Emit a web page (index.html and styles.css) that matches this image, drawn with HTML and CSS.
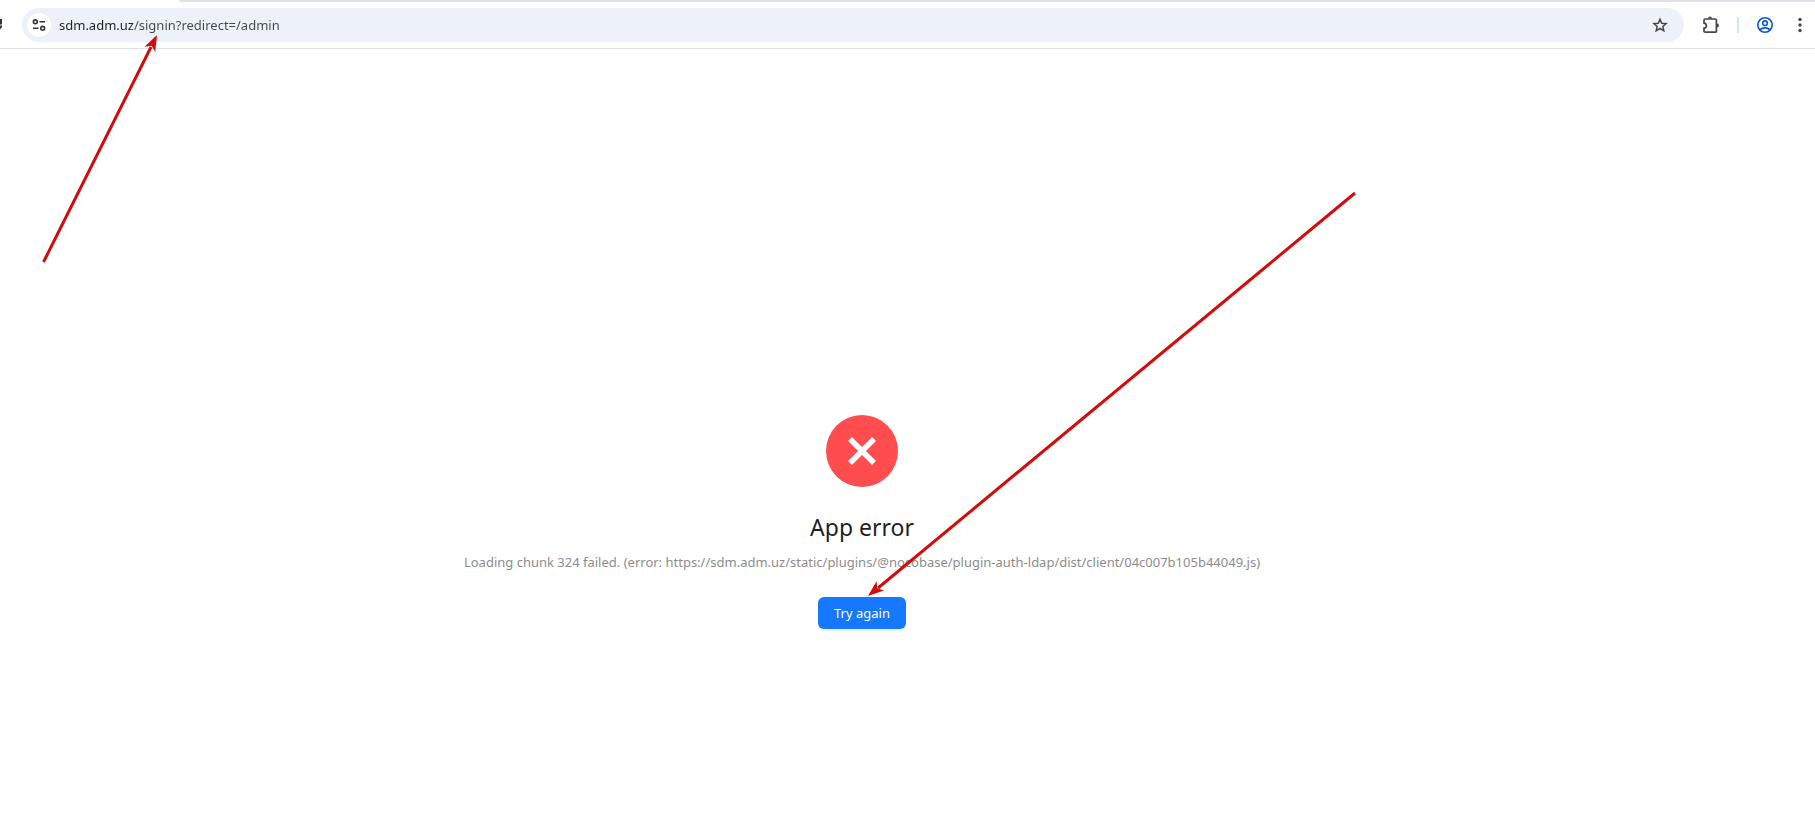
FILE: index.html
```html
<!DOCTYPE html>
<html lang="en">
<head>
    <meta charset="UTF-8">
    <meta name="viewport" content="width=device-width, initial-scale=1.0">
    <title>App error</title>
    <link rel="stylesheet" href="styles.css">
</head>
<body>
    <header class="browser">
        <div class="tab-strip"></div>
        <div class="toolbar">
            <button class="reload" aria-label="Reload">
                <svg width="16" height="16" viewBox="0 0 16 16" fill="none" stroke="#333" stroke-width="2">
                    <path d="M14.5 9A6 6 0 1 1 13 4.5"/>
                    <path d="M15 2v4.500h-5M16 9.500h-3"/>
                </svg>
            </button>
            <div class="address">
                <button class="site-info" aria-label="View site information">
                    <svg width="14" height="12" viewBox="0 0 14 12" fill="none" stroke="#303236" stroke-width="1.6">
                        <circle cx="3.3" cy="2.8" r="1.9"/>
                        <path d="M7.5 2.8H13M1 9.3h5.5"/>
                        <circle cx="10.7" cy="9.3" r="1.9"/>
                    </svg>
                </button>
                <input class="url" type="text" aria-label="Address" value="sdm.adm.uz/signin?redirect=/admin">
                <button class="star" aria-label="Bookmark this page">
                    <svg width="16" height="16" viewBox="0 0 16 16" fill="none" stroke="#474747" stroke-width="1.5">
                        <path d="M8 2.200l1.700 4 4.400.4-3.300 2.900 1 4.300L8 11.500l-3.800 2.300 1-4.300-3.300-2.900 4.400-.4z"/>
                    </svg>
                </button>
            </div>
            <div class="actions">
                <button aria-label="Extensions">
                    <svg width="18" height="18" viewBox="0 0 18 18">
                        <path d="M2 4.200Q2 3 3.200 3H13.200Q14.400 3 14.400 4.200V15.200Q14.400 16.200 13.200 16.200H3.200Q2 16.200 2 15.200V12.200C5.200 11.800 5.200 7.500 2 7.100Z" fill="none" stroke="#474747" stroke-width="1.7"/>
                        <path d="M6 2.500a2 2 0 0 1 4 0zM15 7.500a2 2 0 0 1 0 4z" fill="#474747"/>
                    </svg>
                </button>
                <span class="divider"></span>
                <button aria-label="Profile">
                    <svg width="18" height="18" viewBox="0 0 18 18" fill="none" stroke="#0b57d0" stroke-width="1.6">
                        <circle cx="9" cy="9" r="7.2"/>
                        <circle cx="9" cy="7.2" r="2.3"/>
                        <path d="M3.800 13.800c2.800-2.600 7.600-2.600 10.400 0"/>
                    </svg>
                </button>
                <button aria-label="Menu">
                    <svg width="18" height="18" viewBox="0 0 18 18" fill="#474747">
                        <circle cx="9" cy="3.5" r="1.7"/>
                        <circle cx="9" cy="9" r="1.7"/>
                        <circle cx="9" cy="14.5" r="1.7"/>
                    </svg>
                </button>
            </div>
        </div>
    </header>

    <main class="result">
        <svg class="result-icon" width="72" height="72" viewBox="0 0 72 72">
            <circle cx="36" cy="36" r="36" fill="#ff4d4f"/>
            <path d="M24 24l24 24M48 24L24 48" stroke="#fff" stroke-width="5.5"/>
        </svg>
        <h1 class="result-title">App error</h1>
        <p class="result-text">Loading chunk 324 failed. (error: https://sdm.adm.uz/static/plugins/@nocobase/plugin-auth-ldap/dist/client/04c007b105b44049.js)</p>
        <button class="retry-btn">Try again</button>
    </main>

    <!-- red pointers drawn over the page -->
    <svg class="pointers" width="1815" height="819" viewBox="0 0 1815 819" aria-hidden="true">
        <defs>
            <marker id="head" markerUnits="userSpaceOnUse" markerWidth="17" markerHeight="14" refX="16" refY="7" orient="auto">
                <path d="M16 7L0 1l4 6-4 6z" fill="#d60a0a"/>
            </marker>
        </defs>
        <path d="M43.500 262L151 47" stroke="#d60a0a" stroke-width="3"/>
        <path d="M43.500 262L157 35" marker-end="url(#head)"/>
        <path d="M1355 193L878 588" stroke="#d60a0a" stroke-width="3"/>
        <path d="M1355 193L868 596" marker-end="url(#head)"/>
    </svg>
</body>
</html>
```
FILE: styles.css
```css
body {
    margin: 0;
    font-family: "Noto Sans", "Open Sans", sans-serif;
    font-size: 13px;
    background-color: #fff;
    color: #1f1f1f;
}
button {
    padding: 0;
    border: none;
    background: none;
    font-family: inherit;
    cursor: pointer;
}
svg {
    display: block;
}
.browser {
    border-bottom: 1px solid #dfe1e5;
}
.tab-strip {
    height: 2px;
    margin-left: 179px;
    background-color: #dee1e6;
    border-bottom-left-radius: 8px;
}
.toolbar {
    display: flex;
    align-items: center;
    padding: 6px 6px 6px 0;
}
.reload {
    margin-left: -14px;
    margin-right: 20px;
}
.address {
    flex: 1;
    display: flex;
    align-items: center;
    height: 34px;
    padding: 0 16px 0 5px;
    border-radius: 17px;
    background-color: #ecf1fa;
}
.site-info {
    display: flex;
    align-items: center;
    justify-content: center;
    width: 24px;
    height: 24px;
    border-radius: 50%;
    background-color: #fff;
}
.url {
    flex: 1;
    margin-left: 8px;
    padding: 0;
    border: none;
    outline: none;
    font-family: inherit;
    font-size: 13px;
    line-height: 20px;
    /* host name is darker than the path */
    color: transparent;
    background: linear-gradient(to right, #1f1f1f 74px, #474747 74px);
    background-clip: text;
    -webkit-background-clip: text;
}
.actions {
    display: flex;
    align-items: center;
    gap: 17px;
    padding-left: 18px;
}
.divider {
    width: 2px;
    height: 16px;
    background-color: #d3e3fd;
}
.result {
    display: flex;
    flex-direction: column;
    align-items: center;
    padding: 366px 91px 48px 0;
    text-align: center;
}
.result-title {
    margin: 24px 0 8px;
    font-size: 23px;
    font-weight: 400;
    line-height: 32px;
}
.result-text {
    margin: 0 0 24px;
    line-height: 22px;
    color: #8c8c8c;
}
.retry-btn {
    height: 32px;
    padding: 0 16px;
    border-radius: 6px;
    background-color: #1677ff;
    box-shadow: 0 2px 0 rgba(5, 145, 255, 0.1);
    color: #fff;
    font-size: 13px;
}
.pointers {
    position: absolute;
    top: 0;
    left: 0;
    pointer-events: none;
}
```
